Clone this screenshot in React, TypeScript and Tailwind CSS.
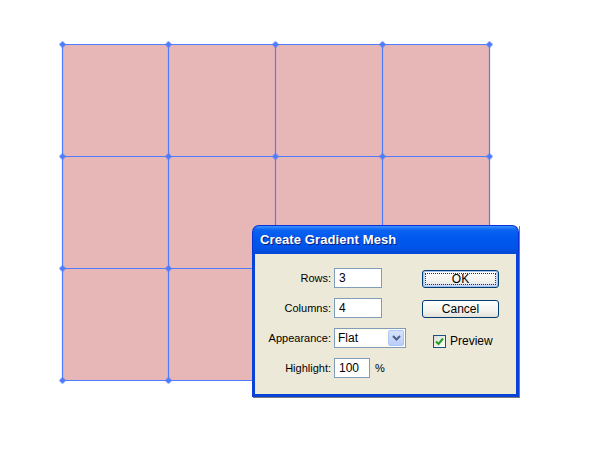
import React from 'react';

const xs = [62.5, 168.5, 275.5, 382.5, 489.5];
const ys = [44.5, 156.5, 268.5, 380.5];

function MeshCanvas() {
  return (
    <svg width="600" height="450" className="block">
      <rect x="62" y="44" width="427" height="336" fill="#E7B7B7" />
      {xs.map((x) => (
        <line key={'v' + x} x1={x} y1={44} x2={x} y2={381} stroke="#4E7CFF" strokeWidth="1.2" />
      ))}
      {ys.map((y) => (
        <line key={'h' + y} x1={62} y1={y} x2={490} y2={y} stroke="#4E7CFF" strokeWidth="1.2" />
      ))}
      {xs.map((x) =>
        ys.map((y) => (
          <g key={x + '-' + y} fill="#4E7CFF">
            <rect x={x - 2} y={y - 2} width="4" height="4" />
            <rect x={x - 3} y={y - 1} width="6" height="2" />
            <rect x={x - 1} y={y - 3} width="2" height="6" />
          </g>
        ))
      )}
    </svg>
  );
}

function TextBox({ value, width }: { value: string; width: string }) {
  return (
    <div className={`${width} h-[20px] bg-white border border-[#7F9DB9] flex items-center pl-[4px] text-[12px] text-black`}>
      {value}
    </div>
  );
}

function XPButton({ label, isDefault }: { label: string; isDefault?: boolean }) {
  return (
    <div
      className={`relative w-[77px] h-[18px] rounded-[3px] border border-[#003C74] flex items-center justify-center text-[12px] text-black bg-[linear-gradient(180deg,#FFFFFF_0%,#F4F3EE_60%,#E3E1D8_100%)] ${
        isDefault ? 'shadow-[inset_0_0_0_1px_#A8C3F0,inset_0_-1px_0_2px_#CEDCF5]' : ''
      }`}
    >
      {isDefault && <span className="absolute inset-[2px] border border-dotted border-[#333]" />}
      {label}
    </div>
  );
}

function GradientMeshDialog() {
  return (
    <div className="absolute left-[252px] top-[225px] w-[267px] flex flex-col shadow-[1px_1px_0_#7a7a7a]">
      <div className="h-[29px] rounded-t-[7px] flex items-center pl-[7px] bg-[linear-gradient(180deg,#3B93FF_0%,#0B63F2_14%,#0058EE_45%,#0054E7_80%,#0047D4_100%)] border border-b-0 border-[#0831D9]">
        <span className="text-white font-bold text-[13px] tracking-[0.1px] [text-shadow:1px_1px_0_#0A1E80]">
          Create Gradient Mesh
        </span>
      </div>
      <div className="bg-[#ECE9D8] border-[3px] border-t-0 border-[#0842D6] h-[143px] flex pt-[14px] text-[11px] text-black">
        <div className="grid grid-cols-[76px_auto] auto-rows-[20px] gap-y-[10px] gap-x-[3px] items-center">
          <span className="text-right">Rows:</span>
          <TextBox value="3" width="w-[48px]" />
          <span className="text-right">Columns:</span>
          <TextBox value="4" width="w-[48px]" />
          <span className="text-right">Appearance:</span>
          <div className="w-[72px] h-[20px] bg-white border border-[#7F9DB9] flex items-stretch">
            <div className="flex-1 flex items-center px-[2px] text-[12px] border border-[#FFFBEA]">Flat</div>
            <div className="w-[16px] m-px rounded-[2px] bg-[linear-gradient(180deg,#D6E3FD_0%,#B9CDF9_100%)] border border-[#B0C6F5] flex items-center justify-center">
              <svg width="9" height="6" viewBox="0 0 9 6">
                <path d="M1 1 L4.5 4.5 L8 1" fill="none" stroke="#4D6185" strokeWidth="2" />
              </svg>
            </div>
          </div>
          <span className="text-right">Highlight:</span>
          <div className="flex items-center gap-[5px]">
            <TextBox value="100" width="w-[36px]" />
            <span>%</span>
          </div>
        </div>
        <div className="ml-[16px] flex flex-col gap-[12px] pt-[2px]">
          <XPButton label="OK" isDefault />
          <XPButton label="Cancel" />
          <div className="flex items-center gap-[4px] pl-[11px] pt-[2px]">
            <div className="w-[13px] h-[13px] border border-[#1C5180] bg-[linear-gradient(135deg,#DCDCD7_0%,#FFFFFF_100%)] flex items-center justify-center">
              <svg width="9" height="9" viewBox="0 0 9 9">
                <path d="M1 4.5 L3.5 7 L8 1.5" fill="none" stroke="#21A121" strokeWidth="2" />
              </svg>
            </div>
            <span className="text-[12px]">Preview</span>
          </div>
        </div>
      </div>
    </div>
  );
}

export default function App() {
  return (
    <div className="relative w-[600px] h-[450px] bg-white overflow-hidden font-['Liberation_Sans',Arial,sans-serif]">
      <MeshCanvas />
      <GradientMeshDialog />
    </div>
  );
}
